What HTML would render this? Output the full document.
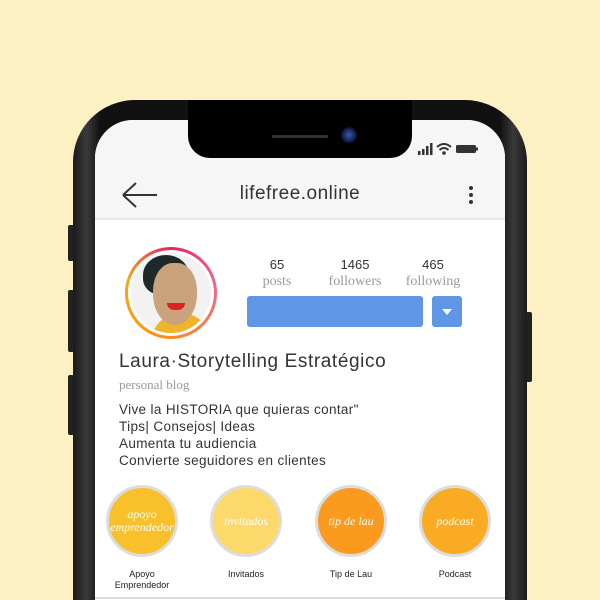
<!DOCTYPE html>
<html><head><meta charset="utf-8"><style>
*{margin:0;padding:0;box-sizing:border-box}
html,body{width:600px;height:600px;overflow:hidden}
body{background:#fdf0c3;position:relative;font-family:"Liberation Sans",sans-serif;color:#222}
.abs{position:absolute}
.phone{left:73px;top:100px;width:454px;height:500px;background:linear-gradient(90deg,#1a1a1a,#3a3a3a 3%,#111 6%,#111 94%,#3a3a3a 97%,#1a1a1a);border-radius:62px 62px 0 0}
.screen{left:95px;top:120px;width:410px;height:480px;background:#fff;border-radius:38px 38px 0 0;overflow:hidden}
.hdr{left:0;top:0;width:410px;height:100px;background:#f6f6f6;border-bottom:2px solid #e6e6e6}
.notch{left:188px;top:100px;width:224px;height:58px;background:#000;border-radius:0 0 22px 22px}
.btn{background:#222;border-radius:2px}
.serif{font-family:"Liberation Serif",serif;color:#999;font-size:14px}
.stat{text-align:center;width:80px}
.stat b{display:block;font-weight:normal;font-size:13px;color:#333}
.hl{width:72px;height:72px;border-radius:50%;border:3px solid #ddd;display:flex;align-items:center;justify-content:center;color:#fff;font-family:"Liberation Serif",serif;font-style:italic;font-size:12px;text-align:center;line-height:13px}
.hlt{font-size:9px;text-align:center;width:90px;line-height:11px;color:#222}
</style></head><body>
<div class="abs btn" style="left:68px;top:225px;width:6px;height:36px"></div>
<div class="abs btn" style="left:68px;top:290px;width:6px;height:62px"></div>
<div class="abs btn" style="left:68px;top:375px;width:6px;height:60px"></div>
<div class="abs btn" style="left:526px;top:312px;width:6px;height:70px"></div>
<div class="abs phone"></div>
<div class="abs screen">
  <div class="abs hdr"></div>
  <svg class="abs" style="left:26px;top:60px" width="38" height="30"><path d="M2 15H36M2 15L15 3M2 15L15 27" stroke="#333" stroke-width="2" fill="none"/></svg>
  <div class="abs" style="left:0;top:63px;width:410px;text-align:center;font-size:19px;color:#333;letter-spacing:0.5px">lifefree.online</div>
  <div class="abs" style="left:374px;top:66px;width:4px;height:4px;border-radius:2px;background:#333;box-shadow:0 7px #333,0 14px #333"></div>
  <div class="abs" style="left:30px;top:127px;width:92px;height:92px;border-radius:50%;background:conic-gradient(#e91e63,#f06292 20%,#ff9800 60%,#f5a623 80%,#e91e63)"></div>
  <div class="abs" style="left:33px;top:130px;width:86px;height:86px;border-radius:50%;background:#fff"></div>
  <div class="abs" style="left:36px;top:133px;width:80px;height:80px;border-radius:50%;background:#f2f2f2;overflow:hidden">
    <div class="abs" style="left:20px;top:60px;width:60px;height:30px;background:#f0b429;border-radius:30px 30px 0 0"></div>
    <div class="abs" style="left:12px;top:2px;width:46px;height:40px;background:#1e2a2a;border-radius:50% 50% 20% 40%"></div>
    <div class="abs" style="left:22px;top:10px;width:44px;height:62px;background:#c9a37c;border-radius:45% 45% 50% 50%"></div>
    <div class="abs" style="left:36px;top:50px;width:18px;height:7px;background:#d22;border-radius:0 0 9px 9px"></div>
  </div>
  <div class="abs stat" style="left:142px;top:137px"><b>65</b><span class="serif">posts</span></div>
  <div class="abs stat" style="left:220px;top:137px"><b>1465</b><span class="serif">followers</span></div>
  <div class="abs stat" style="left:298px;top:137px"><b>465</b><span class="serif">following</span></div>
  <div class="abs" style="left:152px;top:176px;width:176px;height:31px;background:#5f96e6;border-radius:3px"></div>
  <div class="abs" style="left:337px;top:176px;width:30px;height:31px;background:#5f96e6;border-radius:3px"></div>
  <div class="abs" style="left:347px;top:189px;width:0;height:0;border-left:5px solid transparent;border-right:5px solid transparent;border-top:6px solid #fff"></div>
  <div class="abs" style="left:24px;top:231px;font-size:19px;color:#333;letter-spacing:0.6px">Laura·Storytelling Estratégico</div>
  <div class="abs serif" style="left:24px;top:257px;font-size:13px">personal blog</div>
  <div class="abs" style="left:24px;top:281px;font-size:13.5px;line-height:17px;color:#333;letter-spacing:0.35px">Vive la HISTORIA que quieras contar"<br>Tips| Consejos| Ideas<br>Aumenta tu audiencia<br>Convierte seguidores en clientes</div>
  <div class="abs hl" style="left:11px;top:365px;background:#f8c12c">apoyo<br>emprendedor</div>
  <div class="abs hl" style="left:115px;top:365px;background:#fdd96b">invitados</div>
  <div class="abs hl" style="left:220px;top:365px;background:#fa9a1e">tip de lau</div>
  <div class="abs hl" style="left:324px;top:365px;background:#f9ac23">podcast</div>
  <div class="abs hlt" style="left:2px;top:449px">Apoyo<br>Emprendedor</div>
  <div class="abs hlt" style="left:106px;top:449px">Invitados</div>
  <div class="abs hlt" style="left:211px;top:449px">Tip de Lau</div>
  <div class="abs hlt" style="left:315px;top:449px">Podcast</div>
  <div class="abs" style="left:0;top:477px;width:410px;height:2px;background:#ddd"></div>
</div>
<div class="abs notch"></div>
<div class="abs" style="left:272px;top:135px;width:56px;height:3px;border-radius:2px;background:#333"></div>
<div class="abs" style="left:341px;top:127px;width:16px;height:16px;border-radius:50%;background:radial-gradient(#3a5ab0,#0a1030 70%)"></div>
<svg class="abs" style="left:418px;top:143px" width="62" height="12">
<rect x="0" y="8" width="2.5" height="4" fill="#333"/><rect x="4" y="6" width="2.5" height="6" fill="#333"/><rect x="8" y="3" width="2.5" height="9" fill="#333"/><rect x="12" y="0" width="2.5" height="12" fill="#333"/>
<path d="M19 4Q26 -2 33 4M21.5 7Q26 3 30.5 7" stroke="#333" stroke-width="2" fill="none"/><circle cx="26" cy="10" r="1.8" fill="#333"/>
<rect x="38" y="2" width="20" height="8" rx="1.5" fill="#333"/><rect x="58" y="4.5" width="2" height="3" fill="#333"/>
</svg>
</body></html>
